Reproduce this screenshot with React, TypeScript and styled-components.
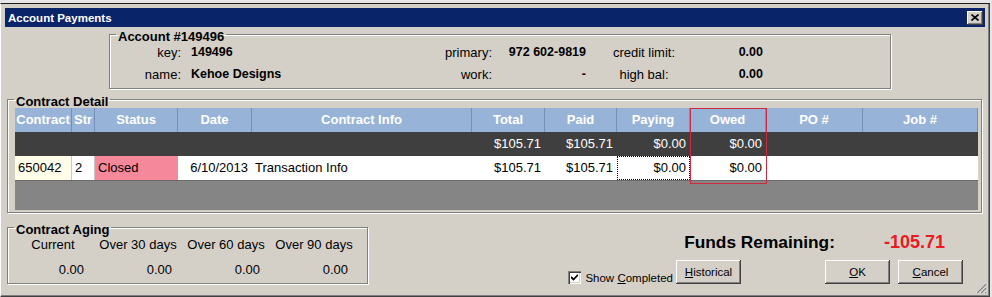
import React from "react";
import styled, { createGlobalStyle } from "styled-components";

const GlobalStyle = createGlobalStyle`
  html, body {
    margin: 0;
    padding: 0;
    background: #e6e6e6;
  }
  body {
    font-family: "Liberation Sans", Arial, sans-serif;
    font-size: 13px;
    color: #000;
  }
  #root {
    width: 992px;
    height: 297px;
    overflow: hidden;
  }
`;

const Window = styled.div`
  position: relative;
  box-sizing: border-box;
  width: 990px;
  height: 294px;
  margin-top: 3px;
  padding: 4px 4px 0 4px;
  background: #d4d0c8;
  border-top: 1px solid #1c1c1c;
  border-left: 1px solid #ffffff;
  border-right: 1px solid #404040;
  border-bottom: 1px solid #404040;
  box-shadow: inset -1px -1px 0 #808080;
  display: flex;
  flex-direction: column;
`;

const TitleBar = styled.div`
  height: 19px;
  flex: none;
  display: flex;
  align-items: center;
  justify-content: space-between;
  background: #0a246a;
  color: #fff;
  font-weight: bold;
  font-size: 11.5px;
  padding-left: 3px;
`;

const CloseButton = styled.div`
  width: 16px;
  height: 14px;
  margin-right: 2px;
  background: #d4d0c8;
  box-shadow: inset -1px -1px 0 #404040, inset 1px 1px 0 #fff,
    inset -2px -2px 0 #808080;
  display: flex;
  align-items: center;
  justify-content: center;
`;

const Content = styled.div`
  flex: 1;
  display: flex;
  flex-direction: column;
  padding-left: 2px;
`;

const Group = styled.fieldset<{ $width: number; $left?: number; $top?: number }>`
  box-sizing: border-box;
  width: ${({ $width }) => $width}px;
  margin: ${({ $top = 0 }) => $top}px 0 0 ${({ $left = 0 }) => $left}px;
  padding: 0;
  min-width: 0;
  border: 1px solid #808080;
  box-shadow: inset 1px 1px 0 #fff, 1px 1px 0 #fff;
`;

const Legend = styled.legend`
  margin-left: 6px;
  padding: 5px 2px 0 2px;
  font-weight: bold;
  font-size: 13px;
  line-height: 15px;
  background: #d4d0c8;
  background-clip: content-box;
`;

const AccountGrid = styled.div`
  display: grid;
  grid-template-columns: 71px 219px 92px 94px 116px 61px 1fr;
  grid-auto-rows: 22px;
  align-items: center;
  margin: -3px 0 3px 0;
`;

const Label = styled.span<{ $align?: string }>`
  text-align: ${({ $align = "right" }) => $align};
  white-space: nowrap;
`;

const Value = styled.span<{ $align?: string }>`
  font-weight: bold;
  font-size: 12.5px;
  text-align: ${({ $align = "left" }) => $align};
  padding-left: ${({ $align = "left" }) => ($align === "left" ? "10px" : "0")};
  white-space: nowrap;
`;

const GridWrap = styled.div`
  position: relative;
  margin: -1px 3px 2px 7px;
`;

const DataGrid = styled.div`
  display: grid;
  grid-template-columns: 57px 23px 83px 74px 220px 73px 72px 73px 76px 97px 115px;
  grid-template-rows: 24px 24px 24px 30px;
  background: #868586;
`;

const HeadCell = styled.div`
  background: #97b3d8;
  color: #fff;
  font-weight: bold;
  line-height: 24px;
  text-align: center;
  white-space: nowrap;
  overflow: hidden;
  border-right: 1px solid #7590b8;
  &:last-child {
    border-right: none;
  }
`;

const Cell = styled.div<{ $align?: string; $bg?: string; $dark?: boolean; $focus?: boolean; $sep?: boolean }>`
  background: ${({ $bg, $dark }) => $bg || ($dark ? "#3f3f3f" : "#fff")};
  color: ${({ $dark }) => ($dark ? "#fff" : "#000")};
  line-height: 24px;
  padding: 0 4px 0 3px;
  text-align: ${({ $align = "left" }) => $align};
  white-space: nowrap;
  overflow: hidden;
  border-right: ${({ $sep }) => ($sep ? "1px solid #c8c8c8" : "none")};
  outline: ${({ $focus }) => ($focus ? "1px dotted #000" : "none")};
  outline-offset: -1px;
`;

const Filler = styled.div`
  grid-column: 1 / -1;
  box-sizing: border-box;
  border-top: 1px solid #6a6a6a;
  background: #868586;
`;

const RedBox = styled.div`
  position: absolute;
  left: 675px;
  top: 0;
  width: 77px;
  height: 76px;
  box-sizing: border-box;
  border: 1px solid #d0283c;
  pointer-events: none;
`;

const BottomRow = styled.div`
  display: flex;
`;

const AgingGrid = styled.div`
  display: grid;
  grid-template-columns: 82px 88px 88px 88px;
  grid-template-rows: 16px 16px;
  row-gap: 9px;
  margin: 0 0 3px 0;
  line-height: 16px;
`;

const AgingLabel = styled.span`
  text-align: center;
  padding-left: 8px;
  white-space: nowrap;
`;

const AgingValue = styled.span`
  text-align: right;
  padding-right: 6px;
`;

const ActionPanel = styled.div`
  flex: 1;
  display: flex;
  flex-direction: column;
  padding-top: 20px;
`;

const FundsRow = styled.div`
  display: flex;
  justify-content: flex-end;
  align-items: baseline;
  gap: 49px;
  padding-right: 40px;
  height: 19px;
`;

const FundsLabel = styled.span`
  font-weight: bold;
  font-size: 17.3px;
  line-height: 19px;
`;

const FundsValue = styled.span`
  font-weight: bold;
  font-size: 18px;
  line-height: 19px;
  color: #ec1822;
`;

const ButtonRow = styled.div`
  display: flex;
  justify-content: flex-end;
  align-items: flex-end;
  margin-top: 8px;
  padding-right: 22px;
`;

const CheckLabel = styled.label`
  display: flex;
  align-items: center;
  gap: 4px;
  margin-right: 3px;
  height: 13px;
  font-size: 11.5px;
  white-space: nowrap;
`;

const CheckBox = styled.span`
  width: 13px;
  height: 13px;
  box-sizing: border-box;
  background: #fff;
  box-shadow: inset 1px 1px 0 #808080, inset 2px 2px 0 #404040,
    inset -1px -1px 0 #fff, inset -2px -2px 0 #d4d0c8;
  display: flex;
  align-items: center;
  justify-content: center;
`;

const Button = styled.button<{ $gap?: number }>`
  width: 65px;
  height: 24px;
  margin-left: ${({ $gap = 0 }) => $gap}px;
  padding: 0;
  border: none;
  background: #d4d0c8;
  color: #000;
  font-family: "Liberation Sans", Arial, sans-serif;
  font-size: 11.5px;
  box-shadow: inset -1px -1px 0 #404040, inset 1px 1px 0 #fff,
    inset -2px -2px 0 #808080;
`;

const Key = styled.span`
  text-decoration: underline;
`;

const Grip = styled.svg`
  position: absolute;
  right: 2px;
  bottom: 2px;
`;

const columns = [
  "Contract",
  "Str",
  "Status",
  "Date",
  "Contract Info",
  "Total",
  "Paid",
  "Paying",
  "Owed",
  "PO #",
  "Job #",
];

const aging = [
  { label: "Current", value: "0.00" },
  { label: "Over 30 days", value: "0.00" },
  { label: "Over 60 days", value: "0.00" },
  { label: "Over 90 days", value: "0.00" },
];

export default function App() {
  return (
    <>
      <GlobalStyle />
      <Window>
        <TitleBar>
          <span>Account Payments</span>
          <CloseButton>
            <svg width="8" height="7" viewBox="0 0 8 7">
              <path d="M0.5 0.5 L7.5 6.5 M7.5 0.5 L0.5 6.5" stroke="#000" strokeWidth="1.6" />
            </svg>
          </CloseButton>
        </TitleBar>
        <Content>
          <Group $width={782} $left={102} $top={-3}>
            <Legend>Account #149496</Legend>
            <AccountGrid>
              <Label>key:</Label>
              <Value>149496</Value>
              <Label>primary:</Label>
              <Value $align="right">972 602-9819</Value>
              <Label $align="center">credit limit:</Label>
              <Value $align="right">0.00</Value>
              <span />
              <Label>name:</Label>
              <Value>Kehoe Designs</Value>
              <Label>work:</Label>
              <Value $align="right">-</Value>
              <Label $align="center">high bal:</Label>
              <Value $align="right">0.00</Value>
              <span />
            </AccountGrid>
          </Group>

          <Group $width={975}>
            <Legend>Contract Detail</Legend>
            <GridWrap>
              <DataGrid>
                {columns.map((c) => (
                  <HeadCell key={c}>{c}</HeadCell>
                ))}

                <Cell $dark />
                <Cell $dark />
                <Cell $dark />
                <Cell $dark />
                <Cell $dark />
                <Cell $dark $align="right">$105.71</Cell>
                <Cell $dark $align="right">$105.71</Cell>
                <Cell $dark $align="right">$0.00</Cell>
                <Cell $dark $align="right">$0.00</Cell>
                <Cell $dark />
                <Cell $dark />

                <Cell $bg="#fffce8" $sep>650042</Cell>
                <Cell $sep>2</Cell>
                <Cell $bg="#f5889b">Closed</Cell>
                <Cell $align="right">6/10/2013</Cell>
                <Cell>Transaction Info</Cell>
                <Cell $align="right">$105.71</Cell>
                <Cell $align="right">$105.71</Cell>
                <Cell $align="right" $focus>$0.00</Cell>
                <Cell $align="right">$0.00</Cell>
                <Cell />
                <Cell />

                <Filler />
              </DataGrid>
              <RedBox />
            </GridWrap>
          </Group>

          <BottomRow>
            <Group $width={361} $top={4}>
              <Legend>Contract Aging</Legend>
              <AgingGrid>
                {aging.map((a) => (
                  <AgingLabel key={a.label}>{a.label}</AgingLabel>
                ))}
                {aging.map((a) => (
                  <AgingValue key={a.label + "v"}>{a.value}</AgingValue>
                ))}
              </AgingGrid>
            </Group>

            <ActionPanel>
              <FundsRow>
                <FundsLabel>Funds Remaining:</FundsLabel>
                <FundsValue>-105.71</FundsValue>
              </FundsRow>
              <ButtonRow>
                <CheckLabel>
                  <CheckBox>
                    <svg width="7" height="7" viewBox="0 0 7 7">
                      <path d="M0 3 L2.5 5.5 L7 0.8" stroke="#000" strokeWidth="1.8" fill="none" />
                    </svg>
                  </CheckBox>
                  <span>
                    Show <Key>C</Key>ompleted
                  </span>
                </CheckLabel>
                <Button>
                  <Key>H</Key>istorical
                </Button>
                <Button $gap={84}>
                  <Key>O</Key>K
                </Button>
                <Button $gap={8}>
                  <Key>C</Key>ancel
                </Button>
              </ButtonRow>
            </ActionPanel>
          </BottomRow>
        </Content>
        <Grip width="12" height="12" viewBox="0 0 12 12">
          <path d="M11 1 L1 11 M11 5 L5 11 M11 9 L9 11" stroke="#fff" strokeWidth="1" />
          <path d="M11 2 L2 11 M11 6 L6 11 M11 10 L10 11" stroke="#808080" strokeWidth="1.2" />
        </Grip>
      </Window>
    </>
  );
}
